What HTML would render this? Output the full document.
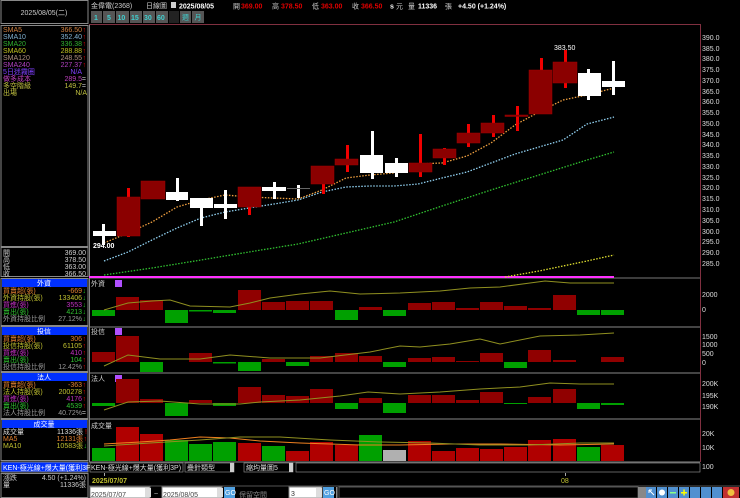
<!DOCTYPE html>
<html><head><meta charset="utf-8"><style>
html,body{margin:0;padding:0;background:#000;width:740px;height:498px;overflow:hidden}
svg{display:block}
text{font-family:"Liberation Sans","WenQuanYi Zen Hei","Noto Sans CJK TC",sans-serif;font-size:7px}
.m{font-family:"Liberation Mono","WenQuanYi Zen Hei",monospace}
</style></head><body>
<svg width="740" height="498" viewBox="0 0 740 498" xmlns="http://www.w3.org/2000/svg">
<rect width="740" height="498" fill="#000"/>
<!-- left panel frames -->
<rect x="1" y="0.5" width="87" height="23" fill="none" stroke="#888"/>
<text x="44" y="15" fill="#ccc" text-anchor="middle" font-size="6.5">2025/08/05(二)</text>
<rect x="1" y="25.5" width="87" height="221" fill="none" stroke="#888"/>
<g font-size="6.5">
<text x="3" y="32" fill="#d08040">SMA5</text><text x="82" y="32" fill="#d08040" text-anchor="end">366.50</text>
<text x="3" y="39" fill="#80b0d0">SMA10</text><text x="82" y="39" fill="#80b0d0" text-anchor="end">352.40</text>
<text x="3" y="46" fill="#30b030">SMA20</text><text x="82" y="46" fill="#30b030" text-anchor="end">336.38</text>
<text x="3" y="53" fill="#c0c020">SMA60</text><text x="82" y="53" fill="#c0c020" text-anchor="end">288.88</text>
<text x="3" y="60" fill="#b09080">SMA120</text><text x="82" y="60" fill="#b09080" text-anchor="end">248.55</text>
<text x="3" y="67" fill="#b040c0">SMA240</text><text x="82" y="67" fill="#b040c0" text-anchor="end">227.37</text>
<text x="3" y="74" fill="#8040ff">5日迷霧圈</text><text x="82" y="74" fill="#8040ff" text-anchor="end">N/A</text>
<text x="3" y="81" fill="#c040c0">做多成本</text><text x="82" y="81" fill="#c040c0" text-anchor="end">289.5</text>
<text x="3" y="88" fill="#c0c040">多空階級</text><text x="82" y="88" fill="#c0c040" text-anchor="end">149.7</text>
<text x="3" y="95" fill="#c0c040">出場</text><text x="87" y="95" fill="#c0c040" text-anchor="end">N/A</text>
<g fill="#e00000"><text x="86" y="32" text-anchor="end">↑</text><text x="86" y="39" text-anchor="end">↑</text><text x="86" y="46" text-anchor="end">↑</text><text x="86" y="53" text-anchor="end">↑</text><text x="86" y="60" text-anchor="end">↑</text><text x="86" y="67" text-anchor="end">↑</text></g>
<text x="86" y="81" fill="#ccc" text-anchor="end">=</text><text x="86" y="88" fill="#ccc" text-anchor="end">=</text>
</g>
<rect x="1" y="247.5" width="87" height="29" fill="none" stroke="#888"/>
<g font-size="6.5" fill="#ccc">
<text x="3" y="255">開</text><text x="86" y="255" text-anchor="end">369.00</text>
<text x="3" y="262">高</text><text x="86" y="262" text-anchor="end">378.50</text>
<text x="3" y="269">低</text><text x="86" y="269" text-anchor="end">363.00</text>
<text x="3" y="276">收</text><text x="86" y="276" text-anchor="end">366.50</text>
</g>
<!-- 外資 -->
<rect x="1" y="278.5" width="87" height="47" fill="none" stroke="#888"/>
<rect x="2" y="279" width="85" height="8" fill="#0030ff"/>
<text x="44" y="285.5" fill="#fff" text-anchor="middle" font-size="6.5">外資</text>
<g font-size="6.5">
<text x="3" y="293" fill="#e08030">買賣超(張)</text><text x="82" y="293" fill="#e08030" text-anchor="end">-669</text>
<text x="3" y="300" fill="#c0c030">外資持股(張)</text><text x="82" y="300" fill="#c0c030" text-anchor="end">133406</text>
<text x="3" y="307" fill="#c030c0">買進(張)</text><text x="82" y="307" fill="#c030c0" text-anchor="end">3553</text>
<text x="3" y="314" fill="#30c030">賣出(張)</text><text x="82" y="314" fill="#30c030" text-anchor="end">4213</text>
<text x="3" y="321" fill="#999">外資持股比例</text><text x="82" y="321" fill="#999" text-anchor="end">27.12%</text>
<g fill="#20c020"><text x="86" y="293" text-anchor="end">↓</text><text x="86" y="300" text-anchor="end">↓</text><text x="86" y="307" text-anchor="end">↓</text><text x="86" y="314" text-anchor="end">↓</text><text x="86" y="321" text-anchor="end">↓</text></g>
</g>
<!-- 投信 -->
<rect x="1" y="326.5" width="87" height="45" fill="none" stroke="#888"/>
<rect x="2" y="327" width="85" height="8" fill="#0030ff"/>
<text x="44" y="333.5" fill="#fff" text-anchor="middle" font-size="6.5">投信</text>
<g font-size="6.5">
<text x="3" y="341" fill="#e08030">買賣超(張)</text><text x="82" y="341" fill="#e08030" text-anchor="end">306</text>
<text x="3" y="348" fill="#c0c030">投信持股(張)</text><text x="82" y="348" fill="#c0c030" text-anchor="end">61105</text>
<text x="3" y="355" fill="#c030c0">買進(張)</text><text x="82" y="355" fill="#c030c0" text-anchor="end">410</text>
<text x="3" y="362" fill="#30c030">賣出(張)</text><text x="82" y="362" fill="#30c030" text-anchor="end">104</text>
<text x="3" y="369" fill="#999">投信持股比例</text><text x="82" y="369" fill="#999" text-anchor="end">12.42%</text>
<g fill="#e00000"><text x="86" y="341" text-anchor="end">↑</text><text x="86" y="348" text-anchor="end">↑</text><text x="86" y="355" text-anchor="end">↑</text><text x="86" y="362" text-anchor="end">↑</text><text x="86" y="369" text-anchor="end">↑</text></g>
</g>
<!-- 法人 -->
<rect x="1" y="372.5" width="87" height="46" fill="none" stroke="#888"/>
<rect x="2" y="373" width="85" height="8" fill="#0030ff"/>
<text x="44" y="379.5" fill="#fff" text-anchor="middle" font-size="6.5">法人</text>
<g font-size="6.5">
<text x="3" y="387" fill="#e08030">買賣超(張)</text><text x="82" y="387" fill="#e08030" text-anchor="end">-363</text>
<text x="3" y="394" fill="#c0c030">法人持股(張)</text><text x="82" y="394" fill="#c0c030" text-anchor="end">200278</text>
<text x="3" y="401" fill="#c030c0">買進(張)</text><text x="82" y="401" fill="#c030c0" text-anchor="end">4176</text>
<text x="3" y="408" fill="#30c030">賣出(張)</text><text x="82" y="408" fill="#30c030" text-anchor="end">4539</text>
<text x="3" y="415" fill="#999">法人持股比例</text><text x="82" y="415" fill="#999" text-anchor="end">40.72%</text>
<g fill="#e00000"><text x="86" y="387" text-anchor="end">↑</text><text x="86" y="394" text-anchor="end">↑</text><text x="86" y="401" text-anchor="end">↑</text><text x="86" y="408" text-anchor="end">↑</text></g>
<text x="86" y="415" fill="#ccc" text-anchor="end">=</text>
</g>
<!-- 成交量 -->
<rect x="1" y="419.5" width="87" height="41" fill="none" stroke="#888"/>
<rect x="2" y="420" width="85" height="8" fill="#0030ff"/>
<text x="44" y="426.5" fill="#fff" text-anchor="middle" font-size="6.5">成交量</text>
<g font-size="6.5">
<text x="3" y="434" fill="#ddd">成交量</text><text x="83" y="434" fill="#ddd" text-anchor="end">11336張</text>
<text x="3" y="441" fill="#e08030">MA5</text><text x="83" y="441" fill="#e08030" text-anchor="end">12131張</text>
<text x="3" y="448" fill="#c0c030">MA10</text><text x="83" y="448" fill="#c0c030" text-anchor="end">10583張</text>
<text x="87" y="434" fill="#e00000" text-anchor="end">!</text><text x="87" y="441" fill="#e00000" text-anchor="end">↑</text><text x="87" y="448" fill="#20c020" text-anchor="end">↓</text>
</g>
<rect x="1" y="462" width="87" height="10" fill="#0030ff" stroke="#888"/>
<text x="3" y="470" fill="#fff" font-size="6.5">KEN-極光線+爆大量(獲利3P)</text>
<rect x="1" y="473.5" width="87" height="24" fill="none" stroke="#888"/>
<text x="3" y="480" fill="#ccc" font-size="6.5">漲跌</text><text x="86" y="480" fill="#ccc" font-size="6.5" text-anchor="end">4.50 (+1.24%)</text>
<text x="3" y="487" fill="#ccc" font-size="6.5">量</text><text x="86" y="487" fill="#ccc" font-size="6.5" text-anchor="end">11336張</text>

<!-- top header -->
<text x="91" y="8" fill="#ccc" font-size="6.5">金偉電(2368)</text>
<text x="146" y="8" fill="#ccc" font-size="6.5">日線圖</text>
<rect x="171" y="2" width="5" height="6" fill="#ccc"/>
<text x="179" y="8.5" fill="#fff" font-size="8" font-weight="bold">2025/08/05</text>
<g font-size="8" font-weight="bold">
<text x="233" y="8.5" fill="#ccc" font-size="6.5" font-weight="normal">開</text><text x="241" y="8.5" fill="#e00000">369.00</text>
<text x="272" y="8.5" fill="#ccc" font-size="6.5" font-weight="normal">高</text><text x="281" y="8.5" fill="#e00000">378.50</text>
<text x="312" y="8.5" fill="#ccc" font-size="6.5" font-weight="normal">低</text><text x="321" y="8.5" fill="#e00000">363.00</text>
<text x="352" y="8.5" fill="#ccc" font-size="6.5" font-weight="normal">收</text><text x="361" y="8.5" fill="#e00000">366.50</text>
<text x="390" y="8.5" fill="#fff">s</text><text x="396" y="8.5" fill="#ccc" font-size="6.5" font-weight="normal">元</text>
<text x="408" y="8.5" fill="#ccc" font-size="6.5" font-weight="normal">量</text><text x="418" y="8.5" fill="#fff">11336</text>
<text x="445" y="8.5" fill="#ccc" font-size="6.5" font-weight="normal">張</text><text x="458" y="8.5" fill="#fff">+4.50 (+1.24%)</text>
</g>
<g font-size="7.5" font-weight="bold" fill="#40d0d0">
<rect x="91" y="11" width="11" height="12" fill="#555"/><text x="94" y="20">1</text>
<rect x="103" y="11" width="12" height="12" fill="#555"/><text x="107" y="20">5</text>
<rect x="116" y="11" width="13" height="12" fill="#555"/><text x="117.5" y="20">10</text>
<rect x="130" y="11" width="12" height="12" fill="#555"/><text x="131" y="20">15</text>
<rect x="143" y="11" width="12" height="12" fill="#555"/><text x="144" y="20">30</text>
<rect x="156" y="11" width="12" height="12" fill="#555"/><text x="157" y="20">60</text>
<rect x="169" y="11" width="10" height="12" fill="#222"/>
<rect x="180" y="11" width="11" height="12" fill="#555"/><text x="182" y="19.5" font-size="6" font-weight="normal">週</text>
<rect x="192" y="11" width="12" height="12" fill="#555"/><text x="194.5" y="19.5" font-size="6" font-weight="normal">月</text>
</g>

<!-- chart frame -->
<line x1="89.5" y1="24" x2="89.5" y2="462" stroke="#888"/>
<line x1="89" y1="24.5" x2="700" y2="24.5" stroke="#803040"/>
<line x1="700.5" y1="24" x2="700.5" y2="462" stroke="#803040"/>
<line x1="89" y1="278" x2="700" y2="278" stroke="#777"/>
<line x1="89" y1="277" x2="614" y2="277" stroke="#ff30ff" stroke-width="2"/>
<line x1="89" y1="327" x2="700" y2="327" stroke="#888"/>
<line x1="89" y1="373" x2="700" y2="373" stroke="#888"/>
<line x1="89" y1="419" x2="700" y2="419" stroke="#888"/>
<line x1="89" y1="462" x2="700" y2="462" stroke="#888"/>

<!-- price axis -->
<g font-size="7.5" fill="#ddd">
<text x="702" y="40">390.0</text><text x="702" y="51">385.0</text><text x="702" y="61">380.0</text><text x="702" y="72">375.0</text><text x="702" y="83">370.0</text><text x="702" y="94">365.0</text><text x="702" y="104">360.0</text><text x="702" y="115">355.0</text><text x="702" y="126">350.0</text><text x="702" y="137">345.0</text><text x="702" y="147">340.0</text><text x="702" y="158">335.0</text><text x="702" y="169">330.0</text><text x="702" y="180">325.0</text><text x="702" y="190">320.0</text><text x="702" y="201">315.0</text><text x="702" y="212">310.0</text><text x="702" y="223">305.0</text><text x="702" y="234">300.0</text><text x="702" y="244">295.0</text><text x="702" y="255">290.0</text><text x="702" y="266">285.0</text>
<text x="702" y="297">2000</text><text x="702" y="312">0</text>
<text x="702" y="339">1500</text><text x="702" y="347">1000</text><text x="702" y="356">500</text><text x="702" y="365">0</text>
<text x="702" y="386">200K</text><text x="702" y="398">195K</text><text x="702" y="409">190K</text>
<text x="702" y="436">20K</text><text x="702" y="450">10K</text><text x="702" y="469">100</text>
</g>

<!-- MA lines -->
<g fill="none" stroke-width="1.3" stroke-dasharray="1.5 1.5">
<polyline stroke="#f0a040" points="104,243 128,233 152,222 177,207 201,200 225,195 249,197 274,198 298,199 322,190 346,178 370,175 394,173 418,164 442,163 467,156 491,143 515,125 539,112 563,100 587,95 614,88"/>
<polyline stroke="#90d0f0" points="104,261 128,252 152,240 177,228 201,218 225,212 249,208 274,204 298,200 322,192 346,187 370,186 394,186 418,184 442,178 467,172 491,163 515,154 539,147 563,140 587,124 614,117"/>
<polyline stroke="#30c030" points="104,275 152,268 201,260 249,252 298,244 346,233 394,222 442,206 491,190 539,175 587,160 614,152"/>
<polyline stroke="#e0e030" points="505,277 539,271 563,266 587,261 614,255"/>
</g>

<!-- candles -->
<g>
<!-- white -->
<g fill="#fff">
<rect x="102" y="224" width="3" height="21"/><rect x="93" y="231" width="23" height="5"/>
<rect x="176" y="178" width="3" height="23"/><rect x="166" y="192" width="22" height="8"/>
<rect x="200" y="198" width="3" height="28"/><rect x="190" y="198" width="23" height="10"/>
<rect x="224" y="190" width="3" height="29"/><rect x="214" y="204" width="23" height="4"/>
<rect x="273" y="182" width="3" height="17"/><rect x="262" y="187" width="24" height="4"/>
<rect x="297" y="185" width="3" height="13"/>
<rect x="371" y="131" width="3" height="48"/><rect x="360" y="155" width="23" height="18"/>
<rect x="395" y="158" width="3" height="19"/><rect x="385" y="163" width="23" height="10"/>
<rect x="587" y="69" width="3" height="31"/><rect x="578" y="73" width="23" height="23"/>
<rect x="612" y="61" width="3" height="34"/><rect x="602" y="81" width="23" height="6"/>
</g>
<line x1="287" y1="188.5" x2="310" y2="188.5" stroke="#666"/>
<!-- red wicks -->
<g fill="#f00000">
<rect x="127" y="188" width="3" height="49"/>
<rect x="152" y="181" width="3" height="3"/>
<rect x="248" y="207" width="3" height="8"/>
<rect x="322" y="184" width="3" height="10"/>
<rect x="346" y="145" width="3" height="27"/>
<rect x="419" y="134" width="3" height="43"/>
<rect x="443" y="148" width="3" height="17"/>
<rect x="467" y="124" width="3" height="23"/>
<rect x="492" y="115" width="3" height="22"/>
<rect x="516" y="106" width="3" height="25"/>
<rect x="540" y="58" width="3" height="56"/>
<rect x="564" y="50" width="3" height="38"/>
</g>
<g fill="#8b0000" stroke="#a00000" stroke-width="0.5">
<rect x="117" y="197" width="23" height="39"/>
<rect x="141" y="181" width="24" height="18"/>
<rect x="238" y="187" width="23" height="20"/>
<rect x="311" y="166" width="23" height="18"/>
<rect x="335" y="159" width="23" height="6"/>
<rect x="409" y="163" width="23" height="9"/>
<rect x="433" y="149" width="23" height="9"/>
<rect x="457" y="133" width="23" height="10"/>
<rect x="481" y="123" width="23" height="10"/>
<rect x="505" y="115" width="23" height="1.5"/>
<rect x="529" y="70" width="23" height="44"/>
<rect x="553" y="62" width="24" height="21"/>
</g>
<text x="93" y="248" fill="#fff" font-size="7.5" font-weight="bold">294.00</text>
<text x="554" y="50" fill="#fff" font-size="7.5">383.50</text>
</g>

<!-- sub panel labels -->
<g font-size="6" fill="#ccc">
<text x="91" y="286">外資</text><text x="91" y="334">投信</text><text x="91" y="381">法人</text><text x="91" y="428">成交量</text>
</g>
<g fill="#b050ff"><rect x="115" y="280" width="7" height="7"/><rect x="115" y="328" width="7" height="7"/><rect x="115" y="375" width="7" height="7"/></g>

<!-- 外資 bars -->
<g fill="#900000">
<rect x="116" y="297" width="23" height="13"/><rect x="140" y="300" width="23" height="10"/><rect x="238" y="290" width="23" height="20"/><rect x="262" y="302" width="23" height="8"/><rect x="286" y="301" width="23" height="9"/><rect x="310" y="301" width="23" height="9"/><rect x="359" y="307" width="23" height="3"/><rect x="408" y="303" width="23" height="7"/><rect x="432" y="302" width="23" height="8"/><rect x="456" y="308" width="23" height="2"/><rect x="480" y="302" width="23" height="8"/><rect x="504" y="306" width="23" height="4"/><rect x="528" y="308" width="23" height="2"/><rect x="553" y="295" width="23" height="15"/>
</g>
<g fill="#00a000">
<rect x="92" y="310" width="23" height="6"/><rect x="165" y="310" width="23" height="13"/><rect x="189" y="310" width="23" height="1.5"/><rect x="213" y="310" width="23" height="3"/><rect x="335" y="310" width="23" height="10"/><rect x="383" y="310" width="23" height="6"/><rect x="577" y="310" width="23" height="5"/><rect x="601" y="310" width="23" height="5"/>
</g>
<polyline fill="none" stroke="#909020" points="104,310 128,303 152,301 170,300 190,306 230,307 250,303 270,298 300,294 330,291 360,294 400,293 440,291 470,288 500,287 530,283 545,281 570,283 614,283"/>

<!-- 投信 bars -->
<g fill="#900000">
<rect x="92" y="352" width="23" height="10"/><rect x="116" y="336" width="23" height="26"/><rect x="189" y="353" width="23" height="9"/><rect x="262" y="359" width="23" height="3"/><rect x="310" y="356" width="23" height="6"/><rect x="335" y="353" width="23" height="9"/><rect x="359" y="356" width="23" height="6"/><rect x="408" y="358" width="23" height="4"/><rect x="432" y="357" width="23" height="5"/><rect x="456" y="361" width="23" height="1"/><rect x="480" y="353" width="23" height="9"/><rect x="528" y="350" width="23" height="12"/><rect x="553" y="360" width="23" height="2"/><rect x="601" y="357" width="23" height="5"/>
</g>
<g fill="#00a000">
<rect x="140" y="362" width="23" height="10"/><rect x="213" y="362" width="23" height="1.5"/><rect x="238" y="362" width="23" height="9"/><rect x="286" y="362" width="23" height="4"/><rect x="383" y="362" width="23" height="5"/><rect x="504" y="362" width="23" height="6"/>
</g>
<polyline fill="none" stroke="#909020" points="104,366 128,355 160,359 200,359 230,355 270,358 320,358 370,352 400,346 420,347 450,344 480,339 500,344 540,336 580,335 614,333"/>

<!-- 法人 bars -->
<g fill="#900000">
<rect x="116" y="379" width="23" height="24"/><rect x="140" y="399" width="23" height="4"/><rect x="189" y="400" width="23" height="3"/><rect x="238" y="387" width="23" height="16"/><rect x="262" y="395" width="23" height="8"/><rect x="286" y="396" width="23" height="7"/><rect x="310" y="389" width="23" height="14"/><rect x="359" y="398" width="23" height="5"/><rect x="408" y="395" width="23" height="8"/><rect x="432" y="395" width="23" height="8"/><rect x="456" y="400" width="23" height="3"/><rect x="480" y="392" width="23" height="11"/><rect x="528" y="397" width="23" height="6"/><rect x="553" y="389" width="23" height="14"/>
</g>
<g fill="#00a000">
<rect x="92" y="403" width="23" height="3"/><rect x="165" y="403" width="23" height="13"/><rect x="213" y="403" width="23" height="3"/><rect x="335" y="403" width="23" height="6"/><rect x="383" y="403" width="23" height="10"/><rect x="504" y="403" width="23" height="1"/><rect x="577" y="403" width="23" height="6"/><rect x="601" y="403" width="23" height="2"/>
</g>
<polyline fill="none" stroke="#909020" points="104,410 128,402 160,401 200,404 240,404 260,402 300,400 340,396 368,392 400,394 440,392 480,389 520,387 550,383 580,384 614,384"/>

<!-- volume bars -->
<g fill="#b00000">
<rect x="116" y="427" width="23" height="34"/><rect x="140" y="434" width="23" height="27"/><rect x="238" y="443" width="23" height="18"/><rect x="286" y="451" width="23" height="10"/><rect x="310" y="442" width="23" height="19"/><rect x="335" y="445" width="23" height="16"/><rect x="408" y="441" width="23" height="20"/><rect x="432" y="451" width="23" height="10"/><rect x="456" y="448" width="23" height="13"/><rect x="480" y="449" width="23" height="12"/><rect x="504" y="447" width="23" height="14"/><rect x="528" y="440" width="23" height="21"/><rect x="553" y="439" width="23" height="22"/><rect x="601" y="445" width="23" height="16"/>
</g>
<g fill="#00a000">
<rect x="92" y="448" width="23" height="13"/><rect x="165" y="440" width="23" height="21"/><rect x="189" y="444" width="23" height="17"/><rect x="213" y="442" width="23" height="19"/><rect x="262" y="446" width="23" height="15"/><rect x="359" y="435" width="23" height="26"/><rect x="577" y="447" width="23" height="14"/>
</g>
<rect x="383" y="450" width="23" height="11" fill="#b0b0b0"/>
<polyline fill="none" stroke="#f08020" points="104,444 140,442 170,440 200,437 230,438 260,441 300,443 330,444 360,445 400,445 450,444 500,444 560,445 614,444"/>
<polyline fill="none" stroke="#909020" points="104,446 150,443 200,440 240,437 280,437 330,440 380,442 430,443 480,445 530,445 580,443 614,443"/>

<!-- toolbar row -->
<rect x="90" y="463" width="93" height="9" fill="#000" stroke="#888" stroke-width="0.7"/>
<text x="91" y="470" fill="#ddd" font-size="6">KEN-極光線+爆大量(獲利3P)</text>
<rect x="185" y="463" width="49" height="9" fill="#000" stroke="#888" stroke-width="0.7"/>
<text x="187" y="470" fill="#ddd" font-size="6">疊針類型</text>
<rect x="230" y="463" width="4" height="9" fill="#ccc"/>
<rect x="244" y="463" width="49" height="9" fill="#000" stroke="#888" stroke-width="0.7"/>
<text x="246" y="470" fill="#ddd" font-size="6">縮均量圖5</text>
<rect x="289" y="463" width="4" height="9" fill="#ccc"/>
<rect x="296" y="463" width="404" height="9" fill="#000" stroke="#888" stroke-width="0.7"/>
<line x1="104.5" y1="473" x2="104.5" y2="476" stroke="#aaa"/>
<text x="92" y="483" fill="#c0c030" font-size="7" font-weight="bold">2025/07/07</text>
<line x1="565.5" y1="473" x2="565.5" y2="476" stroke="#aaa"/>
<text x="561" y="483" fill="#c0c030" font-size="6.5">08</text>
<line x1="89" y1="486" x2="740" y2="486" stroke="#555"/>

<!-- bottom controls -->
<rect x="90" y="487" width="60" height="11" fill="#fff" stroke="#888"/>
<text x="91" y="497" fill="#444" font-size="10">2025/07/07</text>
<rect x="145" y="488" width="6" height="9" fill="#ddd"/>
<text x="154" y="496" fill="#ccc" font-size="8">~</text>
<rect x="162" y="487" width="60" height="11" fill="#fff" stroke="#888"/>
<text x="163" y="497" fill="#444" font-size="10">2025/08/05</text>
<rect x="217" y="488" width="6" height="9" fill="#ddd"/>
<rect x="224" y="487" width="11" height="11" fill="#50a0e0"/>
<text x="225" y="495" fill="#fff" font-size="5">GO</text>
<text x="239" y="497" fill="#888" font-size="11">保留空間</text>
<rect x="289" y="487" width="33" height="11" fill="#fff" stroke="#888"/>
<text x="291" y="496" fill="#333" font-size="8">3</text>
<rect x="316" y="488" width="6" height="9" fill="#ddd"/>
<rect x="323" y="487" width="11" height="11" fill="#50a0e0"/>
<text x="324" y="495" fill="#fff" font-size="5">GO</text>
<rect x="336" y="487" width="1.5" height="11" fill="#888"/>
<rect x="339" y="487" width="299" height="11" fill="#000" stroke="#555"/>
<rect x="638" y="487" width="8" height="11" fill="#888"/>
<g fill="#5090d0"><rect x="646" y="487" width="10" height="11"/><rect x="657" y="487" width="10" height="11"/><rect x="668" y="487" width="10" height="11"/><rect x="679" y="487" width="10" height="11"/><rect x="690" y="487" width="10" height="11"/><rect x="701" y="487" width="10" height="11"/><rect x="712" y="487" width="10" height="11"/></g>
<rect x="723" y="487" width="16" height="11" fill="#c03030"/>
<circle cx="731" cy="492.5" r="3.5" fill="#f0c040"/>
<circle cx="662" cy="492.5" r="3" fill="#fff"/>
<rect x="670" y="492" width="6" height="1.5" fill="#8f8"/>
<rect x="681" y="492" width="6" height="1.5" fill="#ff0"/><rect x="683.3" y="489.5" width="1.5" height="6" fill="#ff0"/>
<path d="M649 490 l5 5 M649 490 h3 M649 490 v3" stroke="#fff" stroke-width="1" fill="none"/>
</svg>
</body></html>
